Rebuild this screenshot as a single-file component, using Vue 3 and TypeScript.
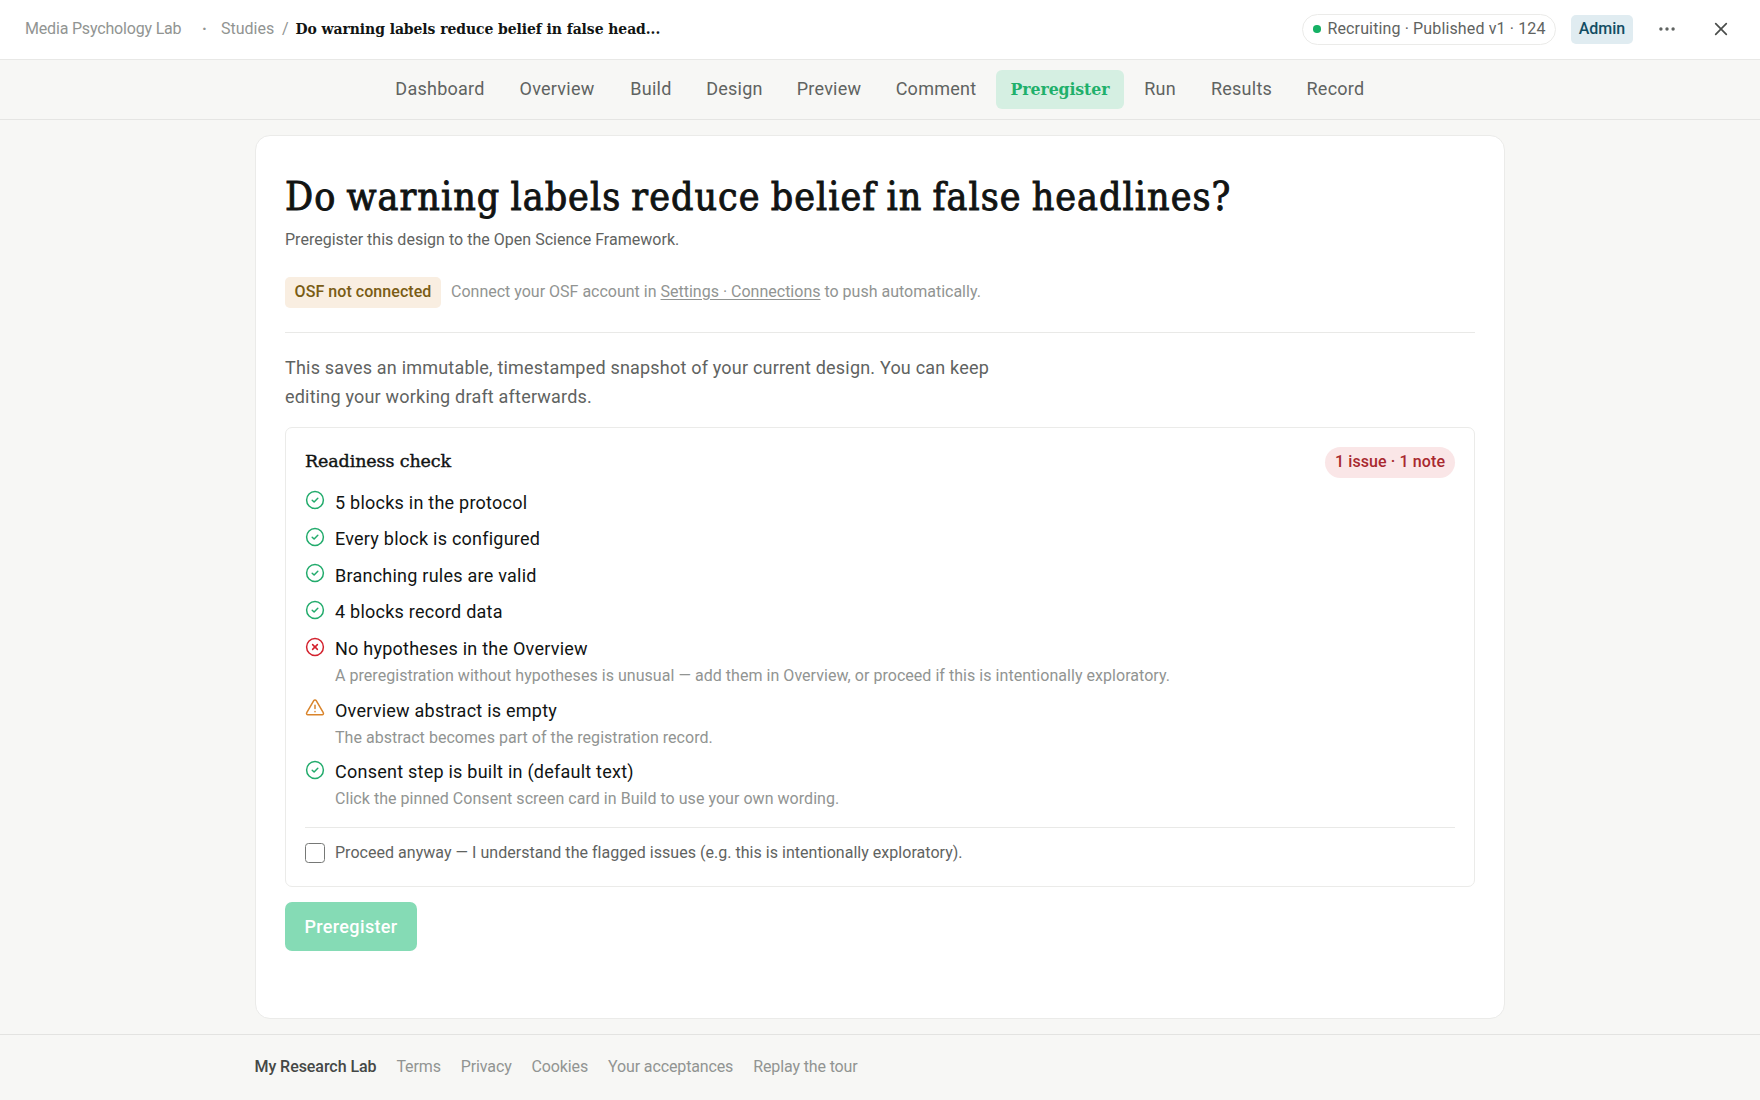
<script setup lang="ts">
type Status = 'ok' | 'issue' | 'note'

interface Tab {
  label: string
  width: number
  active?: boolean
}

interface Check {
  status: Status
  title: string
  hint?: string
}

const tabs: Tab[] = [
  { label: 'Dashboard', width: 118 },
  { label: 'Overview', width: 106 },
  { label: 'Build', width: 72 },
  { label: 'Design', width: 85 },
  { label: 'Preview', width: 94 },
  { label: 'Comment', width: 110 },
  { label: 'Preregister', width: 128, active: true },
  { label: 'Run', width: 62 },
  { label: 'Results', width: 91 },
  { label: 'Record', width: 87 },
]

const checks: Check[] = [
  { status: 'ok', title: '5 blocks in the protocol' },
  { status: 'ok', title: 'Every block is configured' },
  { status: 'ok', title: 'Branching rules are valid' },
  { status: 'ok', title: '4 blocks record data' },
  {
    status: 'issue',
    title: 'No hypotheses in the Overview',
    hint: 'A preregistration without hypotheses is unusual — add them in Overview, or proceed if this is intentionally exploratory.',
  },
  {
    status: 'note',
    title: 'Overview abstract is empty',
    hint: 'The abstract becomes part of the registration record.',
  },
  {
    status: 'ok',
    title: 'Consent step is built in (default text)',
    hint: 'Click the pinned Consent screen card in Build to use your own wording.',
  },
]

const footerLinks = ['Terms', 'Privacy', 'Cookies', 'Your acceptances', 'Replay the tour']
</script>

<template>
  <div class="page">
    <header class="topbar">
      <div class="crumbs">
        <span class="lab">Media Psychology Lab</span>
        <span class="dot-sep">·</span>
        <span class="studies">Studies</span>
        <span class="slash">/</span>
        <span class="study">Do warning labels reduce belief in false head...</span>
      </div>
      <div class="actions">
        <span class="state"><i class="live"></i>Recruiting · Published v1 · 124</span>
        <span class="role">Admin</span>
        <button class="icon-btn" aria-label="More">
          <svg width="20" height="20" viewBox="0 0 20 20">
            <circle cx="3.9" cy="10" r="1.7" /><circle cx="10" cy="10" r="1.7" /><circle cx="16.1" cy="10" r="1.7" />
          </svg>
        </button>
        <button class="icon-btn close" aria-label="Close">
          <svg width="20" height="20" viewBox="0 0 20 20"><path d="M4.7 4.7 15.3 15.3M15.3 4.7 4.7 15.3" /></svg>
        </button>
      </div>
    </header>

    <nav class="tabs">
      <a v-for="tab in tabs" :key="tab.label" class="tab" :class="{ active: tab.active }" :style="{ width: tab.width + 'px' }">{{ tab.label }}</a>
    </nav>

    <main class="card">
      <h1>Do warning labels reduce belief in false headlines?</h1>
      <p class="subtitle">Preregister this design to the Open Science Framework.</p>

      <div class="osf">
        <span class="osf-badge">OSF not connected</span>
        <span class="osf-text">Connect your OSF account in <a>Settings · Connections</a> to push automatically.</span>
      </div>

      <p class="intro">This saves an immutable, timestamped snapshot of your current design. You can keep editing your working draft afterwards.</p>

      <section class="readiness">
        <div class="readiness-head">
          <h2>Readiness check</h2>
          <span class="count">1 issue · 1 note</span>
        </div>
        <ul>
          <li v-for="check in checks" :key="check.title">
            <svg class="mark" :class="check.status" width="20" height="20" viewBox="0 0 20 20">
              <template v-if="check.status === 'note'">
                <path d="M8.75 2.6 1.75 14.7A1.35 1.35 0 0 0 2.95 16.8H17.05A1.35 1.35 0 0 0 18.25 14.7L11.25 2.6A1.45 1.45 0 0 0 8.75 2.6Z" />
                <path d="M10 7.2V10.6M10 13.6V13.7" />
              </template>
              <template v-else>
                <circle cx="10" cy="10" r="8.4" />
                <path v-if="check.status === 'ok'" d="M7.2 10.2 9.1 12 12.8 8.3" />
                <path v-else d="M7.6 7.6 12.4 12.4M12.4 7.6 7.6 12.4" />
              </template>
            </svg>
            <div>
              <div class="check-title">{{ check.title }}</div>
              <div v-if="check.hint" class="check-hint">{{ check.hint }}</div>
            </div>
          </li>
        </ul>
        <label class="proceed">
          <input type="checkbox" />
          <span>Proceed anyway — I understand the flagged issues (e.g. this is intentionally exploratory).</span>
        </label>
      </section>

      <button class="submit" disabled>Preregister</button>
    </main>

    <footer class="footer">
      <div class="footer-inner">
        <span class="brand">My Research Lab</span>
        <a v-for="link in footerLinks" :key="link">{{ link }}</a>
      </div>
    </footer>
  </div>
</template>

<style>
body {
  margin: 0;
  background: #f7f7f5;
}
</style>

<style scoped>
.page {
  display: flex;
  flex-direction: column;
  box-sizing: border-box;
  height: 1100px;
  overflow: hidden;
  background: #f7f7f5;
  color: #111413;
  font-family: Roboto, "Liberation Sans", sans-serif;
  font-size: 16px;
}
.page * {
  box-sizing: border-box;
}
h1, h2, p, ul {
  margin: 0;
  padding: 0;
}

/* Top bar */
.topbar {
  display: flex;
  flex: none;
  align-items: center;
  justify-content: space-between;
  height: 60px;
  padding: 0 25px 1px;
  background: #fff;
  border-bottom: 1px solid #e8e8e6;
}
.crumbs {
  display: flex;
  color: #919492;
  line-height: 24px;
  white-space: nowrap;
}
.lab {
  width: 177px;
  letter-spacing: -0.18px;
}
.dot-sep {
  width: 19px;
  font-weight: 700;
}
.studies {
  width: 61px;
}
.slash {
  width: 13.5px;
}
.study {
  color: #111413;
  font-family: "DejaVu Serif Condensed", "DejaVu Serif", serif;
  font-size: 15.5px;
  font-weight: 700;
  letter-spacing: -0.06px;
}
.actions {
  display: flex;
  align-items: center;
}
.state {
  display: flex;
  align-items: center;
  width: 254px;
  height: 31px;
  padding: 0 0 1px 10px;
  border: 1px solid #ebebe9;
  border-radius: 16px;
  color: #5f6361;
  letter-spacing: 0.13px;
  white-space: nowrap;
}
.live {
  width: 7.5px;
  height: 7.5px;
  margin: 1px 7px 0 0;
  border-radius: 50%;
  background: #15b165;
}
.role {
  width: 62px;
  height: 29px;
  margin-left: 15px;
  border-radius: 5px;
  background: #e0ecf1;
  color: #124d63;
  font-weight: 500;
  line-height: 28px;
  text-align: center;
}
.icon-btn {
  display: flex;
  width: 20px;
  height: 20px;
  margin-left: 24px;
  padding: 0;
  border: 0;
  background: none;
}
.icon-btn svg {
  fill: #5f6361;
  stroke: #5f6361;
  stroke-width: 0;
}
.icon-btn.close {
  margin: 0 4px 0 34px;
}
.icon-btn.close svg {
  stroke: #4a4d4b;
  stroke-width: 1.7;
  stroke-linecap: round;
}

/* Section tabs */
.tabs {
  display: flex;
  flex: none;
  align-items: center;
  justify-content: center;
  gap: 5px;
  height: 60px;
  border-bottom: 1px solid #e5e5e3;
}
.tab {
  height: 39px;
  border-radius: 6px;
  color: #5f6361;
  font-size: 18px;
  letter-spacing: 0.25px;
  line-height: 37px;
  text-align: center;
}
.tab.active {
  background: #d5efe2;
  color: #1fb06b;
  font-family: "DejaVu Serif Condensed", "DejaVu Serif", serif;
  font-size: 17.5px;
  font-weight: 700;
  letter-spacing: -0.1px;
  line-height: 38px;
}

/* Main card */
.card {
  display: flex;
  flex: none;
  flex-direction: column;
  align-items: flex-start;
  width: 1250px;
  height: 884px;
  margin: 15px auto 0;
  padding: 36px 29px 0;
  border: 1px solid #ebebe9;
  border-radius: 15px;
  background: #fff;
}
h1 {
  font-family: "DejaVu Serif Condensed", "DejaVu Serif", serif;
  font-size: 39px;
  font-weight: 400;
  letter-spacing: 1.03px;
  line-height: 49px;
  white-space: nowrap;
  word-spacing: -2px;
  -webkit-text-stroke: 0.9px #111413;
}
.subtitle {
  margin-top: 7px;
  color: #5f6361;
  letter-spacing: 0.02px;
  line-height: 24px;
}
.osf {
  display: flex;
  align-self: stretch;
  gap: 10px;
  height: 81px;
  padding-top: 25px;
  border-bottom: 1px solid #e9e9e7;
  line-height: 29px;
}
.osf-badge {
  width: 156px;
  height: 31px;
  border-radius: 5px;
  background: #f9eee1;
  color: #7a5c14;
  font-weight: 500;
  letter-spacing: 0.06px;
  text-align: center;
}
.osf-text {
  color: #919492;
}
.osf-text a {
  text-decoration: underline;
  text-underline-offset: 2px;
}
.intro {
  width: 730px;
  margin-top: 20px;
  color: #5f6361;
  font-size: 18px;
  letter-spacing: 0.2px;
  line-height: 29.4px;
}

/* Readiness panel */
.readiness {
  align-self: stretch;
  height: 460px;
  margin-top: 15.4px;
  padding: 19px 19px 0;
  border: 1px solid #ebebe9;
  border-radius: 7px;
}
.readiness-head {
  display: flex;
  align-items: center;
  justify-content: space-between;
  height: 31px;
}
h2 {
  height: 31px;
  font-family: "DejaVu Serif", serif;
  font-size: 17.5px;
  font-weight: 400;
  letter-spacing: -0.12px;
  line-height: 29px;
  -webkit-text-stroke: 0.4px #111413;
}
.count {
  width: 130px;
  height: 31px;
  border-radius: 16px;
  background: #fae6e7;
  color: #a8292f;
  font-weight: 500;
  letter-spacing: 0.1px;
  line-height: 29px;
  text-align: center;
}
ul {
  display: flex;
  flex-direction: column;
  gap: 10px;
  margin-top: 11.4px;
  list-style: none;
}
li {
  display: flex;
  gap: 10px;
}
.mark {
  flex: none;
  margin-top: 0.6px;
  fill: none;
  stroke-width: 1.5;
  stroke-linecap: round;
  stroke-linejoin: round;
}
.mark.ok {
  stroke: #22ab6c;
}
.mark.issue {
  stroke: #d3222e;
}
.mark.note {
  stroke: #d9842b;
}
.check-title {
  font-size: 18px;
  letter-spacing: 0.24px;
  line-height: 26.6px;
}
.check-hint {
  margin: 1.5px 0 -0.5px;
  color: #919492;
  letter-spacing: 0.04px;
  line-height: 24px;
}
.proceed {
  display: flex;
  align-items: center;
  gap: 10px;
  height: 36px;
  margin-top: 16.6px;
  padding-top: 14px;
  border-top: 1px solid #e9e9e7;
  color: #5f6361;
  letter-spacing: 0.03px;
}
.proceed input {
  width: 20px;
  height: 20px;
  margin: 0;
  border: 1px solid #767876;
  border-radius: 3.5px;
  background: #fff;
  appearance: none;
}

.submit {
  width: 132px;
  height: 49px;
  margin-top: 15px;
  padding: 0 0 1px;
  border: 0;
  border-radius: 7px;
  background: #85dbb5;
  color: #fff;
  font-family: inherit;
  font-size: 18px;
  font-weight: 500;
  letter-spacing: 0.36px;
}

/* Footer */
.footer {
  flex: none;
  height: 66px;
  margin-top: 15px;
  border-top: 1px solid #e3e3e1;
}
.footer-inner {
  display: flex;
  gap: 20px;
  width: 1251px;
  margin: 0 auto;
  color: #919492;
  letter-spacing: -0.13px;
  line-height: 64px;
}
.brand {
  color: #454846;
  font-weight: 500;
  letter-spacing: -0.06px;
}
</style>
